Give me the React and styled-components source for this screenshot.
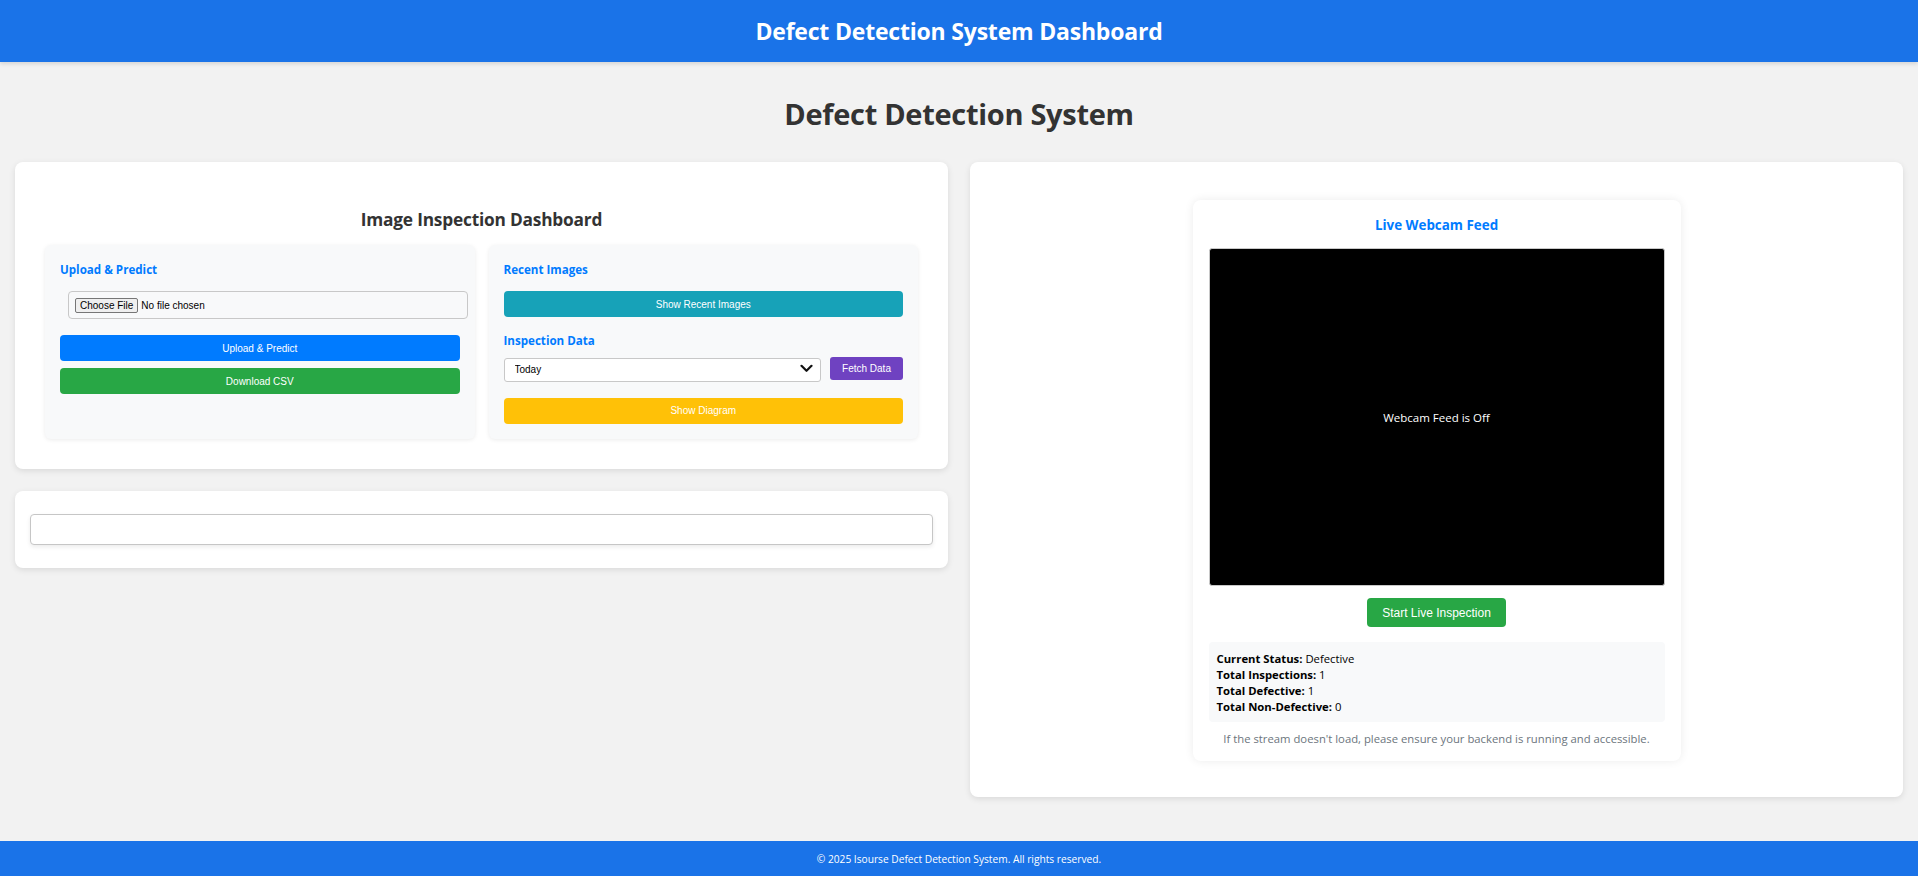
import React from "react"
import styled, { createGlobalStyle } from "styled-components"

const GlobalStyle = createGlobalStyle`
  html, body {
    margin: 0;
    padding: 0;
    background: #f2f2f2;
    font-family: "Open Sans", "Noto Sans", sans-serif;
    color: #333;
  }
  * { box-sizing: border-box; }
`

const stats = [
  { label: "Current Status:", value: "Defective" },
  { label: "Total Inspections:", value: "1" },
  { label: "Total Defective:", value: "1" },
  { label: "Total Non-Defective:", value: "0" },
]

const ChevronDown = () => (
  <svg width="13" height="9" viewBox="0 0 13 9">
    <path d="M1.5 1.8 L6.5 6.8 L11.5 1.8" fill="none" stroke="#111" strokeWidth="2.2" strokeLinecap="round" strokeLinejoin="round" />
  </svg>
)

const App = () => {
  return (
    <>
      <GlobalStyle />
      <Page>
        <TopBar>
          <TopTitle>Defect Detection System Dashboard</TopTitle>
        </TopBar>

        <PageTitle>Defect Detection System</PageTitle>

        <Columns>
          <LeftColumn>
            <Card>
              <CardTitle>Image Inspection Dashboard</CardTitle>
              <PanelGrid>
                <Panel>
                  <PanelHeading>Upload &amp; Predict</PanelHeading>
                  <FileField>
                    <FileButton>Choose File</FileButton>
                    <FileText>No file chosen</FileText>
                  </FileField>
                  <ActionButton $bg="#007bff">Upload &amp; Predict</ActionButton>
                  <ActionButton $bg="#28a745" $gap="7px">Download CSV</ActionButton>
                </Panel>

                <Panel>
                  <PanelHeading>Recent Images</PanelHeading>
                  <ActionButton $bg="#17a2b8" $gap="0">Show Recent Images</ActionButton>
                  <PanelHeading $top="14px">Inspection Data</PanelHeading>
                  <FilterRow>
                    <SelectWrap>
                      <DateSelect defaultValue="today">
                        <option value="today">Today</option>
                        <option value="week">This Week</option>
                        <option value="month">This Month</option>
                      </DateSelect>
                      <SelectArrow>
                        <ChevronDown />
                      </SelectArrow>
                    </SelectWrap>
                    <FetchButton>Fetch Data</FetchButton>
                  </FilterRow>
                  <ActionButton $bg="#ffc107" $gap="16px">Show Diagram</ActionButton>
                </Panel>
              </PanelGrid>
            </Card>

            <ResultCard>
              <ResultBox />
            </ResultCard>
          </LeftColumn>

          <WebcamCard>
            <WebcamInner>
              <WebcamTitle>Live Webcam Feed</WebcamTitle>
              <VideoScreen>Webcam Feed is Off</VideoScreen>
              <StartButton>Start Live Inspection</StartButton>
              <StatsBox>
                {stats.map(s => (
                  <StatLine key={s.label}>
                    <b>{s.label}</b> {s.value}
                  </StatLine>
                ))}
              </StatsBox>
              <Hint>If the stream doesn't load, please ensure your backend is running and accessible.</Hint>
            </WebcamInner>
          </WebcamCard>
        </Columns>

        <Footer>© 2025 Isourse Defect Detection System. All rights reserved.</Footer>
      </Page>
    </>
  )
}

const Page = styled.div`
  min-height: 876px;
  display: flex;
  flex-direction: column;
`

const TopBar = styled.header`
  height: 62px;
  background: #1a73e8;
  display: flex;
  align-items: center;
  justify-content: center;
  box-shadow: 0 2px 4px rgba(0, 0, 0, 0.12);
`

const TopTitle = styled.h1`
  margin: 0;
  color: #fff;
  font-size: 23px;
  font-weight: 700;
  letter-spacing: -0.2px;
`

const PageTitle = styled.h2`
  margin: 0;
  padding: 32px 0 0;
  height: 100px;
  text-align: center;
  font-size: 29px;
  font-weight: 700;
  color: #333;
  letter-spacing: -0.3px;
`

const Columns = styled.main`
  display: grid;
  grid-template-columns: 1fr 1fr;
  gap: 22px;
  padding: 0 15px;
  align-items: start;
`

const LeftColumn = styled.div`
  display: flex;
  flex-direction: column;
  gap: 22px;
`

const Card = styled.section`
  background: #fff;
  border-radius: 8px;
  box-shadow: 0 2px 6px rgba(0, 0, 0, 0.1);
  padding: 30px;
`

const CardTitle = styled.h3`
  margin: 14px 0 12px;
  text-align: center;
  font-size: 17.3px;
  line-height: 27px;
  font-weight: 700;
  color: #333;
  letter-spacing: -0.2px;
`

const PanelGrid = styled.div`
  display: grid;
  grid-template-columns: 1fr 1fr;
  gap: 14px;
`

const Panel = styled.div`
  background: #f8f9fa;
  border-radius: 6px;
  box-shadow: 0 1px 4px rgba(0, 0, 0, 0.08);
  padding: 15px;
  display: flex;
  flex-direction: column;
`

const PanelHeading = styled.h4`
  margin: ${p => p.$top || "0"} 0 ${p => (p.$top ? "6px" : "12px")};
  font-size: 11.6px;
  line-height: 19px;
  font-weight: 700;
  color: #007bff;
`

const FileField = styled.div`
  margin: 0 -8px 16px 8px;
  height: 28px;
  display: flex;
  align-items: center;
  gap: 3px;
  padding: 0 6px;
  background: #f8f9fa;
  border: 1px solid #c8c8c8;
  border-radius: 4px;
  font-family: "Liberation Sans", Arial, sans-serif;
  font-size: 10px;
  color: #000;
`

const FileButton = styled.span`
  height: 15px;
  display: inline-flex;
  align-items: center;
  padding: 0 4px;
  background: #efefef;
  border: 1px solid #767676;
  border-radius: 2px;
`

const FileText = styled.span``

const ActionButton = styled.button`
  margin-top: ${p => p.$gap || "0"};
  height: 26px;
  width: 100%;
  border: none;
  border-radius: 4px;
  background: ${p => p.$bg};
  color: #fff;
  font-family: "Liberation Sans", Arial, sans-serif;
  font-size: 10px;
  cursor: pointer;
`

const FilterRow = styled.div`
  display: flex;
  align-items: center;
  gap: 9px;
`

const SelectWrap = styled.div`
  position: relative;
  flex: 1;
`

const DateSelect = styled.select`
  appearance: none;
  width: 100%;
  height: 24px;
  padding: 0 10px;
  background: #fff;
  border: 1px solid #c8c8c8;
  border-radius: 3px;
  font-family: "Liberation Sans", Arial, sans-serif;
  font-size: 10px;
  color: #000;
`

const SelectArrow = styled.span`
  position: absolute;
  right: 8px;
  top: 8px;
  display: flex;
  pointer-events: none;
`

const FetchButton = styled.button`
  width: 73px;
  height: 23px;
  border: none;
  border-radius: 3px;
  background: #6f42c1;
  color: #fff;
  font-family: "Liberation Sans", Arial, sans-serif;
  font-size: 10px;
  cursor: pointer;
`

const ResultCard = styled.section`
  background: #fff;
  border-radius: 8px;
  box-shadow: 0 2px 6px rgba(0, 0, 0, 0.1);
  padding: 23px 15px 23px;
`

const ResultBox = styled.div`
  height: 31px;
  border: 1px solid #c6c6c6;
  border-radius: 4px;
  background: #fff;
  box-shadow: 0 2px 4px rgba(0, 0, 0, 0.08);
`

const WebcamCard = styled.section`
  background: #fff;
  border-radius: 8px;
  box-shadow: 0 2px 6px rgba(0, 0, 0, 0.1);
  padding: 38px 30px 36px;
  display: flex;
  justify-content: center;
`

const WebcamInner = styled.div`
  width: 488px;
  padding: 16px 16px 14px;
  background: #fff;
  border-radius: 8px;
  box-shadow: 0 0 10px rgba(0, 0, 0, 0.08);
  display: flex;
  flex-direction: column;
  align-items: center;
`

const WebcamTitle = styled.h4`
  margin: 1px 0 14px;
  font-size: 13.4px;
  line-height: 17px;
  font-weight: 700;
  color: #007bff;
`

const VideoScreen = styled.div`
  width: 100%;
  height: 338px;
  background: #000;
  border: 1px solid #c8c8c8;
  border-radius: 3px;
  display: flex;
  align-items: center;
  justify-content: center;
  color: #fff;
  font-size: 11.5px;
`

const StartButton = styled.button`
  margin-top: 12px;
  height: 29px;
  padding: 0 15px;
  border: none;
  border-radius: 4px;
  background: #28a745;
  color: #fff;
  font-family: "Liberation Sans", Arial, sans-serif;
  font-size: 12px;
  cursor: pointer;
`

const StatsBox = styled.div`
  margin-top: 15px;
  width: 100%;
  padding: 9px 8px 7px;
  background: #f8f9fa;
  border-radius: 4px;
  font-size: 11.3px;
  line-height: 16px;
  color: #000;
`

const StatLine = styled.div`
  b { font-weight: 700; }
`

const Hint = styled.p`
  margin: 9px 0 0;
  font-size: 11.3px;
  line-height: 16px;
  color: #6c757d;
`

const Footer = styled.footer`
  margin-top: auto;
  height: 35px;
  background: #1a73e8;
  color: #fff;
  display: flex;
  align-items: center;
  justify-content: center;
  font-size: 10.2px;
`

export default App
